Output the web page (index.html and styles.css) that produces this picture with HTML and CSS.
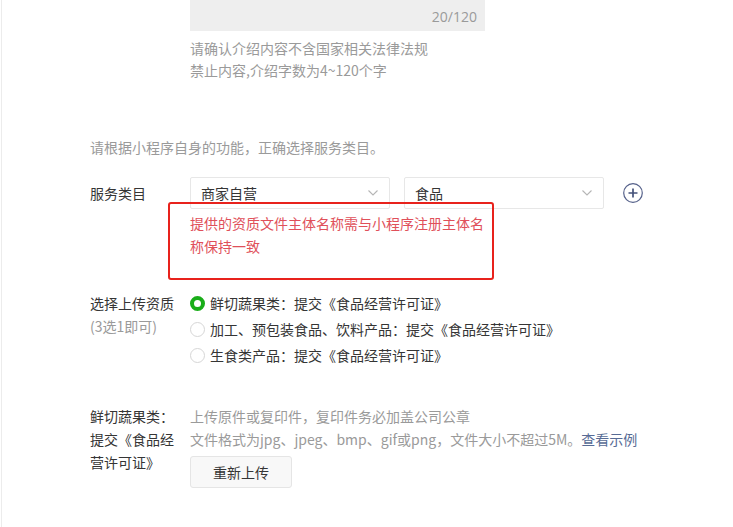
FILE: index.html
```html
<!DOCTYPE html>
<html lang="zh-CN">
<head>
<meta charset="utf-8">
<title>服务类目</title>
<link rel="stylesheet" href="styles.css">
</head>
<body>
<div class="page">
  <div class="row">
    <div class="label"></div>
    <div class="field">
      <div class="textarea"><span class="counter">20/120</span></div>
      <div class="tips">
        <p>请确认介绍内容不含国家相关法律法规</p>
        <p>禁止内容,介绍字数为4~120个字</p>
      </div>
    </div>
  </div>

  <p class="section-desc">请根据小程序自身的功能，正确选择服务类目。</p>

  <div class="row row-category">
    <div class="label label-mid">服务类目</div>
    <div class="field">
      <div class="selects">
        <div class="select"><span>商家自营</span><svg class="chev" width="10" height="6" viewBox="0 0 10 6"><path d="M0.5 0.5 L5 5 L9.5 0.5" fill="none" stroke="#b5b5b5" stroke-width="1.1"/></svg></div>
        <div class="select"><span>食品</span><svg class="chev" width="10" height="6" viewBox="0 0 10 6"><path d="M0.5 0.5 L5 5 L9.5 0.5" fill="none" stroke="#b5b5b5" stroke-width="1.1"/></svg></div>
        <svg class="plus" width="22" height="22" viewBox="0 0 22 22"><circle cx="11" cy="11" r="9.3" fill="none" stroke="#55618a" stroke-width="1.2"/><path d="M11 6.5 V15.5 M6.5 11 H15.5" stroke="#45527a" stroke-width="1.7"/></svg>
      </div>
      <div class="error">提供的资质文件主体名称需与小程序注册主体名称保持一致</div>
      <div class="highlight"></div>
    </div>
  </div>

  <div class="row row-qual">
    <div class="label">
      <p>选择上传资质</p>
      <p class="sub">(3选1即可)</p>
    </div>
    <div class="field">
      <label class="radio checked"><span class="dot"></span>鲜切蔬果类：提交《食品经营许可证》</label>
      <label class="radio"><span class="dot"></span>加工、预包装食品、饮料产品：提交《食品经营许可证》</label>
      <label class="radio"><span class="dot"></span>生食类产品：提交《食品经营许可证》</label>
    </div>
  </div>

  <div class="row row-upload">
    <div class="label label-narrow">鲜切蔬果类：提交《食品经营许可证》</div>
    <div class="field">
      <p class="hint">上传原件或复印件，复印件务必加盖公司公章</p>
      <p class="hint">文件格式为jpg、jpeg、bmp、gif或png，文件大小不超过5M。<a class="link">查看示例</a></p>
      <button class="btn">重新上传</button>
    </div>
  </div>
</div>
</body>
</html>
```

FILE: styles.css
```css
* { box-sizing: border-box; }
html, body { margin: 0; padding: 0; background: #fff; }
body {
  font-family: "Noto Sans CJK SC", "Noto Sans", sans-serif;
  font-size: 14px;
  color: #353535;
  height: 527px;
  overflow: hidden;
}
p { margin: 0; }
.page {
  margin-left: 1px;
  border-left: 1px solid #ececec;
  min-height: 527px;
  padding-left: 88px;
}
.row { display: flex; }
.label { width: 100px; flex: none; line-height: 23px; color: #353535; }
.field { flex: 1; position: relative; }

.textarea {
  width: 295px;
  height: 31px;
  background: #eeeeee;
  display: flex;
  align-items: flex-end;
  justify-content: flex-end;
  padding: 0 8px 3px 0;
}
.counter { color: #9a9a9a; font-size: 14px; line-height: 22px; font-family: "Open Sans", "Noto Sans", sans-serif; }
.tips { margin-top: 6px; color: #9a9a9a; line-height: 22px; }

.section-desc { margin-top: 55px; line-height: 22px; color: #9a9a9a; }

.row-category { margin-top: 19px; }
.label-mid { line-height: 32px; }
.selects { display: flex; align-items: center; gap: 14px; }
.select {
  width: 200px;
  height: 32px;
  border: 1px solid #e7e7e7;
  border-radius: 2px;
  background: #fff;
  display: flex;
  align-items: center;
  justify-content: space-between;
  padding: 0 11px 0 10px;
  color: #353535;
}
.plus { margin-left: 4px; }
.error {
  width: 296px;
  margin-top: 3px;
  color: #e0505a;
  line-height: 23px;
}
.highlight {
  position: absolute;
  left: -22px;
  top: 25px;
  width: 326px;
  height: 78px;
  border: 2.5px solid #e8221c;
  border-radius: 3px;
  pointer-events: none;
}

.row-qual { margin-top: 32px; }
.row-qual .label { padding-top: 1.5px; }
.sub { color: #9a9a9a; }
.radio {
  display: flex;
  align-items: center;
  height: 26px;
  color: #353535;
}
.dot {
  width: 15px;
  height: 15px;
  border-radius: 50%;
  border: 1px solid #d6d6d6;
  margin-right: 5px;
  flex: none;
}
.radio.checked .dot { border: 4px solid #1aad19; }

.row-upload { margin-top: 37px; }
.label-narrow { width: 84px; margin-right: 16px; }
.hint { color: #9a9a9a; line-height: 23px; }
.link { color: #576b95; }
.btn {
  margin-top: 5px;
  width: 102px;
  height: 32px;
  border: 1px solid #e5e5e5;
  border-radius: 3px;
  background: #f8f8f8;
  color: #353535;
  font-family: inherit;
  font-size: 14px;
  padding: 0;
}
```
